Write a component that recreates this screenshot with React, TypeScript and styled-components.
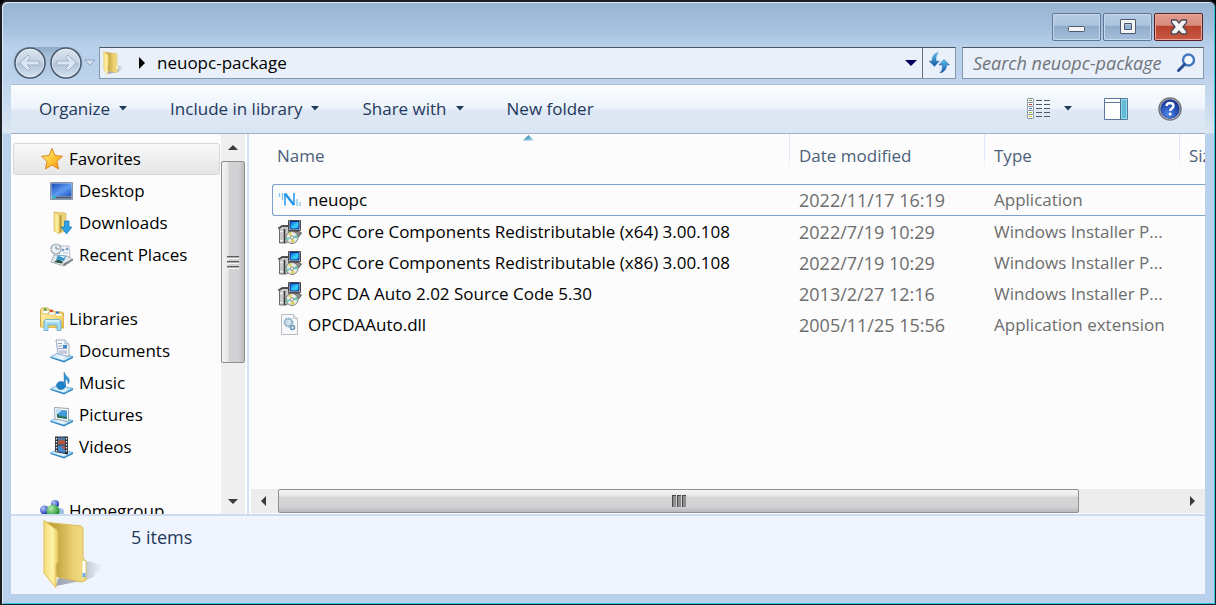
import React from "react";
import styled, { createGlobalStyle } from "styled-components";

const Global = createGlobalStyle`
  * { box-sizing: border-box; }
  html, body, #root { height: 100%; }
  body { margin: 0; background: #000; font-family: "Open Sans", "Noto Sans", sans-serif; font-size: 17px; line-height: 24px; color: #000; }
  button, input { font: inherit; color: inherit; }
  svg { display: block; flex: none; }
`;

/* ---------- window frame ---------- */
const Window = styled.main`
  height: 100vh;
  min-height: 400px;
  display: flex;
  flex-direction: column;
  padding: 0 10px 10px 9px;
  border: solid #1c2024;
  border-width: 2px 1px 1px 2px;
  border-radius: 7px 7px 0 0;
  box-shadow: inset 1px 1px 0 #dfeaf6, inset -1px -1px 0 #2fc4e2;
  background: linear-gradient(#9ab5d2 0, #a3bfdc 24px, #bad1eb 46px, #bad1eb 70px, #d3e1f0 120px, #dbe7f4 131px, #bad1eb 132px);
`;
const TitleBar = styled.header`
  display: flex;
  justify-content: flex-end;
  gap: 2px;
  height: 45px;
  padding-top: 11px;
  padding-right: 2px;
  flex: none;
`;
const CaptionButton = styled.button<{ $danger?: boolean }>`
  width: 49px;
  height: 28px;
  padding: 0;
  display: grid;
  place-items: center;
  border: 1px solid ${(p) => (p.$danger ? "#5b1f26" : "#5f7795")};
  border-radius: 2px;
  box-shadow: inset 0 0 0 1px ${(p) => (p.$danger ? "#e8a69c" : "#c6d8ec")};
  background: ${(p) =>
    p.$danger
      ? "linear-gradient(#e39b8f 0, #d98a7c 44%, #b8402a 45%, #c75a42 100%)"
      : "linear-gradient(#b4cbe3 0, #abc4de 44%, #8fabc9 45%, #a4c0dd 100%)"};
`;
const AddressRow = styled.div`
  display: flex;
  align-items: center;
  height: 32px;
  padding-right: 1px;
  flex: none;
`;
const NavCluster = styled.div`
  display: flex;
  align-items: center;
  gap: 1px;
  width: 88px;
  padding-left: 2px;
  flex: none;
`;
const OrbPair = styled.div`
  display: flex;
  gap: 4px;
  padding: 0 1px;
  border-radius: 17px;
  background: linear-gradient(#8ea9c6 0, #a9c0da 30%, #b4cae4 75%, #bad1eb 100%);
`;
const PlainButton = styled.button`
  padding: 0;
  border: 0;
  background: none;
  display: flex;
  align-items: center;
`;
const AddressBox = styled.div`
  display: flex;
  align-items: stretch;
  flex: 1;
  min-width: 0;
  height: 32px;
  border: 1px solid #8496ab;
  border-top-color: #4d5664;
  background: #e9f0f9;
`;
const Crumbs = styled.nav`
  display: flex;
  align-items: center;
  flex: 1;
  min-width: 0;
  padding-left: 3px;
  gap: 13px;
`;
const CrumbLink = styled.a`
  display: flex;
  align-items: center;
  gap: 11px;
  color: #000;
  text-decoration: none;
`;
const DropButton = styled(PlainButton)`
  width: 22px;
  justify-content: center;
`;
const RefreshButton = styled(PlainButton)`
  width: 33px;
  justify-content: center;
  border-left: 1px solid #65707f;
`;
const SearchBox = styled.label`
  display: flex;
  align-items: center;
  width: 242px;
  height: 32px;
  margin-left: 6px;
  padding: 0 7px 0 10px;
  flex: none;
  border: 1px solid #8496ab;
  border-top-color: #4d5664;
  background: #e9f0f9;
`;
const SearchInput = styled.input`
  flex: 1;
  min-width: 0;
  padding: 0;
  border: 0;
  outline: 0;
  background: none;
  font-size: 18px;
  font-style: italic;
  &::placeholder { color: #6f757c; opacity: 1; }
`;

/* ---------- command bar ---------- */
const Toolbar = styled.div`
  display: flex;
  align-items: center;
  height: 50px;
  margin-top: 5px;
  padding: 0 23px 0 28px;
  flex: none;
  color: #1e395b;
  border-top: 1px solid #a9bfd8;
  border-bottom: 1px solid #a0afc3;
  background: linear-gradient(#fbfdff 0, #edf4fc 48%, #dfe8f5 52%, #dae6f4 100%);
`;
const ToolbarGroup = styled.div`
  display: flex;
  align-items: center;
  gap: 42px;
  flex: 1;
`;
const CommandButton = styled(PlainButton)`
  gap: 8px;
  white-space: nowrap;
`;
const ViewTools = styled.div`
  display: flex;
  align-items: center;
`;
const ViewButton = styled(PlainButton)<{ $after: number }>`
  margin-right: ${(p) => p.$after}px;
`;

/* ---------- panes ---------- */
const Panes = styled.div`
  display: flex;
  flex: 1;
  min-height: 0;
  background: #fcfcfc;
`;
const Sidebar = styled.aside`
  display: flex;
  width: 238px;
  flex: none;
  border-right: 2px solid #d5e3f5;
`;
const Tree = styled.nav`
  flex: 1;
  min-width: 0;
  overflow: hidden;
  padding: 9px 1px 0 2px;
`;
const TreeGroup = styled.ul`
  list-style: none;
  margin: 0 0 32px;
  padding: 0;
`;
const TreeLink = styled.a<{ $level: number; $selected?: boolean }>`
  display: flex;
  align-items: center;
  gap: 5px;
  height: 32px;
  padding-left: ${(p) => (p.$level ? 36 : 26)}px;
  color: #000;
  text-decoration: none;
  white-space: nowrap;
  border: 1px solid ${(p) => (p.$selected ? "#d6d6d6" : "transparent")};
  border-radius: 3px;
  background: ${(p) => (p.$selected ? "linear-gradient(#f9f9f9, #e5e5e5)" : "none")};
`;
const VScroll = styled.div`
  display: flex;
  flex-direction: column;
  width: 24px;
  flex: none;
  margin-right: 2px;
  background: #efefef;
`;
const ScrollArrow = styled(PlainButton)<{ $across?: boolean }>`
  justify-content: center;
  flex: none;
  ${(p) => (p.$across ? "width: 27px;" : "height: 27px;")}
`;
const Track = styled.div`
  flex: 1;
  display: flex;
  min-width: 0;
  min-height: 0;
`;
const VThumb = styled.div`
  width: 24px;
  height: 62%;
  display: grid;
  place-items: center;
  border: 1px solid #8f8f8f;
  border-radius: 2px;
  background: linear-gradient(90deg, #f4f4f4 0, #e6e6e7 28%, #d2d2d4 32%, #d2d2d4 75%, #bdbdbf 100%);
`;
const HScroll = styled.div`
  display: flex;
  height: 24px;
  margin: 0 0 1px 2px;
  flex: none;
  background: #ededed;
`;
const HThumb = styled.div`
  width: 89%;
  height: 24px;
  display: grid;
  place-items: center;
  border: 1px solid #8f8f8f;
  border-radius: 2px;
  background: linear-gradient(#f4f4f4 0, #e8e8e8 28%, #d4d4d6 32%, #d4d4d6 72%, #b9b9bb 100%);
`;
const Content = styled.section`
  display: flex;
  flex-direction: column;
  flex: 1;
  min-width: 0;
`;
const ListArea = styled.div`
  flex: 1;
  min-height: 0;
  overflow: hidden;
  padding-left: 23px;
`;
const FileTable = styled.table`
  table-layout: fixed;
  width: 1107px;
  border-collapse: separate;
  border-spacing: 0;
`;
const HeadCell = styled.th`
  position: relative;
  height: 50px;
  padding: 10px 0 0 5px;
  vertical-align: top;
  text-align: left;
  font-weight: 400;
  color: #4c607a;
  & + & {
    padding-left: 9px;
    border-left: 1px solid;
    border-image: linear-gradient(#dce8f6 0, #dce8f6 45%, transparent 70%) 1;
  }
`;
const SortMark = styled.span`
  position: absolute;
  top: 1px;
  left: 251px;
`;
const Cell = styled.td<{ $tone?: "date" | "plain" }>`
  height: 31px;
  padding: 0 0 0 10px;
  white-space: nowrap;
  color: ${(p) => (p.$tone ? "#6d6d6d" : "#000")};
  font-size: ${(p) => (p.$tone === "date" ? 18 : 17)}px;
`;
const FileRow = styled.tr<{ $selected?: boolean }>`
  ${(p) =>
    p.$selected &&
    `& > td { border: solid #7da2ce; border-width: 1px 0; height: 32px; }
     & > td:first-child { border-left-width: 1px; border-radius: 3px 0 0 3px; padding-left: 9px; }`}
`;
const FileName = styled.span`
  display: flex;
  align-items: center;
  gap: 6px;
  margin-left: -4px;
`;
const Details = styled.footer`
  display: flex;
  gap: 25px;
  height: 80px;
  padding: 3px 0 0 31px;
  flex: none;
  color: #1e395b;
  font-size: 18px;
  border-top: 2px solid #cfdcf0;
  background: #f0f4fc;
`;
const ItemCount = styled.p`
  margin: 6px 0 0;
`;

/* ---------- drawings ---------- */
const Defs = () => (
  <svg width="0" height="0" style={{ position: "absolute" }} aria-hidden="true">
    <defs>
      <linearGradient id="blue" x1="0" y1="0" x2="0" y2="1"><stop offset="0" stopColor="#54c4ec" /><stop offset="1" stopColor="#1a55a6" /></linearGradient>
      <linearGradient id="screen" x1="0" y1="0" x2="1" y2="1"><stop offset="0" stopColor="#1748b8" /><stop offset=".55" stopColor="#5d9bf0" /><stop offset="1" stopColor="#1e55c4" /></linearGradient>
      <linearGradient id="gold" x1="0" y1="0" x2="1" y2="1"><stop offset="0" stopColor="#fff0a8" /><stop offset="1" stopColor="#e8bd3e" /></linearGradient>
      <linearGradient id="goldBack" x1="0" y1="0" x2="1" y2="0"><stop offset="0" stopColor="#b59532" /><stop offset=".35" stopColor="#c9aa48" /><stop offset=".7" stopColor="#ecd273" /><stop offset="1" stopColor="#f0db83" /></linearGradient>
      <linearGradient id="flap" x1="0" y1="0" x2="1" y2="0"><stop offset="0" stopColor="#f3dc7c" /><stop offset=".6" stopColor="#fff3a9" /><stop offset="1" stopColor="#e9cb60" /></linearGradient>
      <linearGradient id="shade" x1="0" y1="0" x2="1" y2="0"><stop offset="0" stopColor="#6d7480" stopOpacity=".65" /><stop offset=".6" stopColor="#8d96a4" stopOpacity=".5" /><stop offset="1" stopColor="#aab2be" stopOpacity="0" /></linearGradient>
      <linearGradient id="orb" x1="0" y1="0" x2="0" y2="1"><stop offset="0" stopColor="#dce6f1" /><stop offset=".48" stopColor="#c2d1e2" /><stop offset=".52" stopColor="#b0c3d8" /><stop offset="1" stopColor="#d5e3f1" /></linearGradient>
      <linearGradient id="star" x1="0" y1="0" x2="1" y2="1"><stop offset="0" stopColor="#fff6a0" /><stop offset=".5" stopColor="#ffc93a" /><stop offset="1" stopColor="#f28a12" /></linearGradient>
      <linearGradient id="tray" x1="0" y1="0" x2="1" y2="0"><stop offset="0" stopColor="#bfe2f5" /><stop offset=".5" stopColor="#eaf7fd" /><stop offset="1" stopColor="#9ccfee" /></linearGradient>
      <linearGradient id="sort" x1="0" y1="0" x2="1" y2="1"><stop offset="0" stopColor="#2c5f78" /><stop offset=".5" stopColor="#5fa9cc" /><stop offset="1" stopColor="#b5e2f7" /></linearGradient>
      <radialGradient id="help" cx=".4" cy=".8" r=".8"><stop offset="0" stopColor="#4c86e8" /><stop offset="1" stopColor="#132f92" /></radialGradient>
      <radialGradient id="ballBlue" cx=".35" cy=".3" r=".7"><stop offset="0" stopColor="#b9c8ff" /><stop offset="1" stopColor="#1e3bb4" /></radialGradient>
      <radialGradient id="ballGreen" cx=".35" cy=".3" r=".7"><stop offset="0" stopColor="#b5efb0" /><stop offset="1" stopColor="#178a2a" /></radialGradient>
      <linearGradient id="monitor" x1="0" y1="0" x2="1" y2="1"><stop offset="0" stopColor="#0a50d0" /><stop offset=".6" stopColor="#35d4f8" /><stop offset="1" stopColor="#1686e8" /></linearGradient>
    </defs>
  </svg>
);

const MinimizeIcon = () => <svg width="20" height="16"><rect x="1.500" y="7.500" width="16" height="5" rx="1" fill="#f4f4f4" stroke="#4b5a6e" /></svg>;
const MaximizeIcon = () => <svg width="18" height="18"><path d="M1.500 1.500h15v14h-15zM5.500 5.500v6h7v-6z" fill="#f4f4f4" fillRule="evenodd" stroke="#4b5a6e" /></svg>;
const CloseIcon = () => <svg width="20" height="18"><path d="M2.500 2h5L10 5l2.500-3h5v2.500L14 9l3.500 4v3h-5L10 13l-2.500 3h-5v-3L6 9 2.500 4.500z" fill="#f4f4f4" stroke="#4f4a58" strokeWidth="1.300" strokeLinejoin="round" /></svg>;
const Orb = ({ flip }: { flip?: boolean }) => (
  <svg width="32" height="32" viewBox="0 0 32 32">
    <circle cx="16" cy="16" r="15" fill="url(#orb)" stroke="#4a596c" strokeWidth="1.500" />
    <circle cx="16" cy="16" r="13.700" fill="none" stroke="#edf3f9" strokeOpacity=".6" />
    <path d="M6 16l8-8 2.500 2.500-3.500 3.500h12v4H13l3.500 3.500L14 24z" transform={flip ? "translate(32) scale(-1 1)" : undefined} fill="#dbe6f2" stroke="#9fb2c9" strokeLinejoin="round" />
  </svg>
);
const HistoryArrow = () => <svg width="12" height="8"><path d="M1 1h10L6 6.500z" fill="#d8e4f0" stroke="#8ea4bf" /></svg>;
const Caret = ({ color = "#1e395b" }: { color?: string }) => <svg width="10" height="8"><path d="M1 1h8L5 5.500z" fill={color} /></svg>;
const BigCaret = () => <svg width="12" height="8"><path d="M0 1h12L6 7z" fill="#00005c" /></svg>;
const CrumbArrow = () => <svg width="8" height="12"><path d="M1 0l6 6-6 6z" /></svg>;
const Folder = ({ w, h }: { w: number; h: number }) => (
  <svg width={w} height={h} viewBox="0 0 64 70">
    <path d="M14 67L16 60 42 42 50 43 62 47 54 54 52 58 44 61z" fill="url(#shade)" />
    <path d="M2 3l37 4q2 1 2 3v29l3 3v19l-4 2-25-5z" fill="url(#goldBack)" stroke="#d9bd5c" />
    <path d="M40.500 42h3v15h-3z" fill="#fff" /><path d="M40.500 54h3v4h-3z" fill="#63aee8" />
    <path d="M2 1.500L15 11q1 1 1 3v29l-2 2v24L2 54z" fill="url(#flap)" stroke="#dfbf54" />
  </svg>
);
const RefreshIcon = () => (
  <svg width="22" height="22" viewBox="0 0 22 22">
    <path d="M10 .5Q7.500 3.500 8 9h3.500L6.500 14.500 1 9h3Q4 2 10 .5z" fill="url(#blue)" stroke="#3e86c8" strokeWidth=".5" />
    <path d="M12 21q3-3 2.500-8H11l5-5.500 5.500 5.500h-3q0 6.500-6.500 8z" fill="url(#blue)" stroke="#1d549c" strokeWidth=".5" />
  </svg>
);
const SearchIcon = () => <svg width="20" height="20"><circle cx="12.500" cy="7" r="5.500" fill="#f3f9ff" stroke="#4278bd" strokeWidth="2.400" /><path d="M8.500 11.500L2.500 17.500" stroke="#254e94" strokeWidth="3" strokeLinecap="round" /></svg>;
const DetailsIcon = () => (
  <svg width="24" height="22" viewBox="0 0 24 22">
    {["#6c9a5a", "#d03a2c", "#3b73c8", "#8cc63f", "#e0c22a"].map((c, i) => (
      <g key={c}>
        <rect x=".5" y={i * 4 + 0.5} width="6" height="4" rx="1" fill="#fff" stroke="#7d8794" />
        <path d={`M2 ${i * 4 + 2.500}h3`} stroke={c} />
        <path d={`M9 ${i * 4 + 2.500}h6M17 ${i * 4 + 2.500}h6`} stroke="#4f5b69" />
      </g>
    ))}
  </svg>
);
const PreviewIcon = () => <svg width="24" height="22"><path d="M.5 .5h23v21H.5z" fill="#fff" stroke="#59789b" /><path d="M0 4.500h17" stroke="#59789b" /><path d="M17.500 1.500h5v19h-5z" fill="#64b9d4" stroke="#8be0ee" /><path d="M16.500 0v22" stroke="#456b8d" /></svg>;
const HelpIcon = () => (
  <svg width="24" height="24" viewBox="0 0 24 24">
    <circle cx="12" cy="12" r="11" fill="#eef0f4" stroke="#72757e" strokeWidth="1.500" />
    <circle cx="12" cy="12" r="9.500" fill="url(#help)" stroke="#26356c" strokeWidth=".6" />
    <path d="M8.500 9q.3-3 3.600-3 3.400.1 3.400 2.800 0 1.700-1.900 2.800-1.300.8-1.300 2.300" fill="none" stroke="#fff" strokeWidth="2.400" />
    <circle cx="12.200" cy="17" r="1.500" fill="#fff" />
  </svg>
);
const SortArrow = () => <svg width="11" height="6"><path d="M0 5.500L5.500 0 11 5.500z" fill="url(#sort)" /></svg>;
const ArrowGlyph = ({ d }: { d: string }) => <svg width="12" height="12"><path d={d} fill="#3a3a3a" /></svg>;
const Grip = ({ across }: { across?: boolean }) => (
  <svg width="14" height="14">
    {across ? (
      <>
        <path d="M0 1h4v12H0zM5 1h4v12H5zM10 1h4v12h-4z" fill="#8d8d8f" />
        <path d="M0 1h1v12H0zM5 1h1v12H5zM10 1h1v12h-1zM0 1h4v1H0zM5 1h4v1H5zM10 1h4v1h-4z" fill="#4a4a4c" />
      </>
    ) : (
      <>
        <path d="M1 1h12v1H1zM1 6h12v1H1zM1 11h12v1H1z" fill="#5c5c5e" />
        <path d="M1 2h12v1H1zM1 7h12v1H1zM1 12h12v1H1z" fill="#b0b0b2" />
        <path d="M1 3h12v1H1zM1 8h12v1H1zM1 13h12v1H1z" fill="#f7f7f7" />
      </>
    )}
  </svg>
);

const StarIcon = () => <svg width="24" height="24" viewBox="0 0 24 24"><path d="M12 1.500l3 7 7.500.8-5.600 5 1.700 7.700-6.600-4-6.600 4 1.700-7.700-5.600-5L9 8.500z" fill="url(#star)" stroke="#dc8a1c" strokeLinejoin="round" /></svg>;
const DesktopIcon = () => <svg width="24" height="24" viewBox="0 0 24 24"><path d="M.5 3.500h22v17H.5z" fill="#b9c2d0" stroke="#8b97aa" /><path d="M1.500 4.500h20v12.500h-20z" fill="url(#screen)" /><path d="M2 17.500h19.500v2H2z" fill="#3f5676" /><path d="M2 17h4v2.500H2z" fill="#34b5c4" /></svg>;
const DownloadsIcon = () => (
  <svg width="24" height="24" viewBox="0 0 24 24">
    <path d="M4 1l12 1v18l-7 2z" fill="#ecd47c" stroke="#d3b458" strokeWidth=".6" />
    <path d="M9.500 5l2-1.500V21l-2 1z" fill="#b8983c" />
    <path d="M4 1l5.500 3.500V23L4 20z" fill="url(#flap)" stroke="#d3b458" strokeWidth=".6" />
    <path d="M14.500 10H19v6h3l-5.500 7L11 16h3.500z" fill="#2ba3e6" stroke="#1773b3" strokeWidth=".7" />
  </svg>
);
const RecentIcon = () => (
  <svg width="24" height="24" viewBox="0 0 24 24">
    <path d="M10 3h9l1 11H9z" fill="#f5f7f9" stroke="#b6bec7" />
    <path d="M12 6h2v2h-2zM16 5h2v2h-2zM13 10h5" fill="#6798c8" stroke="#8ba9c9" strokeWidth=".6" />
    <circle cx="6" cy="6" r="5" fill="#e9f1f4" stroke="#9ba9b4" strokeWidth="1.200" /><path d="M6 2.500V6h3.500" fill="none" stroke="#5e7382" strokeWidth=".8" />
    <path d="M1 19L4 12l13 1 6 4-9 6z" fill="#e4e7ea" stroke="#969ca5" strokeWidth=".8" />
    <path d="M6 17l2-5 8 1-2 5z" fill="#3a97cc" /><path d="M8 12.500l7 .8-1 2z" fill="#d9eef8" /><path d="M4 19q4-4 9 0l-1 1.500z" fill="#284f43" /><path d="M14 23l9-6v-1.500L13 21z" fill="#737981" />
  </svg>
);
const LibrariesIcon = () => (
  <svg width="24" height="24" viewBox="0 0 24 24">
    <path d="M.5 20V3L2 1h6l1 2h4l1 2h8l1.500 1v15z" fill="url(#gold)" stroke="#cda945" />
    <path d="M2.500 3.500h7v3h-7zM8.500 5h7v3h-7zM15 6.500h7v3h-7z" fill="#fff" stroke="#c9b36a" strokeWidth=".6" />
    <path d="M4 1.500h2.500v2H4z" fill="#2d9d45" /><path d="M10 3h2.500v2H10z" fill="#d4372b" /><path d="M16 4.500h3v2h-3z" fill="#3878d0" />
    <path d="M1 8.500h22.500v12H1z" fill="url(#gold)" />
    <path d="M4 23.500V14l1.500-1.500h14L21 14v9.500h-4V18H8v5.500z" fill="#a5dbf3" stroke="#5faad1" strokeWidth=".8" /><path d="M5.500 14h14" stroke="#e7f8ff" strokeWidth="1.500" />
  </svg>
);
const Tray = () => <><path d="M.5 18L8 14l15 3.500-9 4.500z" fill="url(#tray)" stroke="#61abd8" strokeWidth=".8" /><path d="M.5 18L14 22l9-4.500v1.500L14 23.500.5 19z" fill="#2d86c4" /></>;
const DocumentsIcon = () => <svg width="24" height="24" viewBox="0 0 24 24"><Tray /><path d="M6 1h9l4 4v12.500L8 15z" fill="#f7fafd" stroke="#8298ac" strokeWidth=".8" /><path d="M15 1v4h4" fill="#d3deea" stroke="#8298ac" strokeWidth=".6" /><path d="M8 4.500h4M8 7h4M8 9.500h9M9 12h8M9 14h8" stroke="#969fc4" /><path d="M13 6h4v3h-4z" fill="#3c8bc8" /></svg>;
const MusicIcon = () => <svg width="24" height="24" viewBox="0 0 24 24"><Tray /><ellipse cx="11" cy="14.500" rx="4.500" ry="4" fill="#1e82c8" stroke="#0d5c9e" strokeWidth=".5" /><path d="M14 15V1q1 3 4.500 6 2 3-.5 6 .5-4-2.500-5v7z" fill="#3796d5" stroke="#1766a5" strokeWidth=".4" /></svg>;
const PicturesIcon = () => <svg width="24" height="24" viewBox="0 0 24 24"><Tray /><path d="M4.500 4.500l14 1v13L5 16z" fill="#fafcfd" stroke="#98a4b1" /><path d="M6.500 6.500l10.500 1V16L7 14.500z" fill="#439ad7" /><path d="M6.800 11l4 2 6.200 1v2L7 14.500z" fill="#2d7550" /><path d="M7 7l5 .5L7 11z" fill="#c9e9f8" /></svg>;
const VideosIcon = () => <svg width="24" height="24" viewBox="0 0 24 24"><Tray /><path d="M5 1.500h13v18L5 17z" fill="#2c3038" /><path d="M8 2.500h7v7H8z" fill="#477bb4" /><path d="M8 10.500h7v7.500l-7-1.500z" fill="#3e8ad1" /><path d="M8 7l3-3 4 2v3.500H8zM11 12l4-1v4z" fill="#b4573c" /><path d="M6.500 3v15M16.500 3v15" stroke="#e9edf0" strokeWidth="1.400" strokeDasharray="1.500 1.500" /></svg>;
const HomegroupIcon = () => <svg width="24" height="24" viewBox="0 0 24 24"><circle cx="15" cy="5" r="4" fill="url(#ballBlue)" /><circle cx="4.500" cy="11" r="4.500" fill="url(#ballBlue)" /><circle cx="20" cy="13" r="4" fill="#9fc2e6" /><circle cx="13" cy="12" r="6.500" fill="url(#ballGreen)" /></svg>;

const NeuIcon = () => <svg width="24" height="24" viewBox="0 0 24 24"><path d="M7 17.500V5.500M16 17V5" fill="none" stroke="#2196f3" strokeWidth="1.500" /><path d="M7 5.500L16 17" stroke="#2196f3" strokeWidth="2.400" /><path d="M1.500 5v4M4.500 5v7M19 11v7M22 14v4" stroke="#86c3f2" strokeWidth="1.300" /></svg>;
const InstallerIcon = () => (
  <svg width="24" height="24" viewBox="0 0 24 24">
    <path d="M1.500 9L4.500 6H11v15l-3 2H1.500z" fill="#c9c9c9" stroke="#6a6a6a" />
    <path d="M0 8.500L4 6h7" fill="none" stroke="#333" strokeWidth="1.400" /><path d="M6.500 9v14" stroke="#3a3a3a" strokeWidth="1.600" /><path d="M2 11.500h3M2 20.500h3" stroke="#f4f4f4" />
    <path d="M11 11.500h10l2.500 1.500-3 4h-8z" fill="#8a8a8a" stroke="#444" strokeWidth=".8" />
    <path d="M10.500.5h12v10h-12z" fill="#d9d6cc" stroke="#4c4c4c" /><path d="M12 1.500h9v7.500h-9z" fill="url(#monitor)" stroke="#0a2a90" />
    <circle cx="14" cy="17.500" r="6" fill="#e9ebe2" stroke="#707070" strokeWidth=".9" />
    <path d="M14 17.500l-4-4 3-1.500z" fill="#ddd45e" /><path d="M14 17.500l5-3 .5 4z" fill="#6dc9bf" /><path d="M14 17.500l-5 3-1-3z" fill="#6fcac5" /><path d="M14 17.500l3 5h-4z" fill="#d8cf54" />
    <circle cx="14" cy="17.500" r="1.600" fill="#fff" stroke="#666" strokeWidth=".7" />
  </svg>
);
const LibraryFileIcon = () => (
  <svg width="24" height="24" viewBox="0 0 24 24">
    <path d="M3.500 1.500h12l4 4v16h-16z" fill="#f8f9fa" stroke="#b9bdc1" /><path d="M15.500 1.500v4h4" fill="#e4e7ea" stroke="#c2c6ca" />
    <circle cx="10.500" cy="9.500" r="4" fill="#eaf2f8" stroke="#8eb2cc" strokeWidth="2" strokeDasharray="1.800 .7" /><circle cx="10.500" cy="9.500" r="3.200" fill="none" stroke="#8eb2cc" /><circle cx="10.500" cy="9.500" r="1.300" fill="none" stroke="#a9c3d6" strokeWidth=".8" />
    <circle cx="14.500" cy="14.500" r="2" fill="#dce9f2" stroke="#6d96b6" strokeWidth="1.600" />
  </svg>
);

/* ---------- data ---------- */
const groups = [
  { name: "Favorites", icon: <StarIcon />, selected: true, items: [
    { name: "Desktop", icon: <DesktopIcon /> },
    { name: "Downloads", icon: <DownloadsIcon /> },
    { name: "Recent Places", icon: <RecentIcon /> },
  ] },
  { name: "Libraries", icon: <LibrariesIcon />, items: [
    { name: "Documents", icon: <DocumentsIcon /> },
    { name: "Music", icon: <MusicIcon /> },
    { name: "Pictures", icon: <PicturesIcon /> },
    { name: "Videos", icon: <VideosIcon /> },
  ] },
  { name: "Homegroup", icon: <HomegroupIcon />, items: [] },
];
const files = [
  { name: "neuopc", icon: <NeuIcon />, date: "2022/11/17 16:19", type: "Application", selected: true },
  { name: "OPC Core Components Redistributable (x64) 3.00.108", icon: <InstallerIcon />, date: "2022/7/19 10:29", type: "Windows Installer P..." },
  { name: "OPC Core Components Redistributable (x86) 3.00.108", icon: <InstallerIcon />, date: "2022/7/19 10:29", type: "Windows Installer P..." },
  { name: "OPC DA Auto 2.02 Source Code 5.30", icon: <InstallerIcon />, date: "2013/2/27 12:16", type: "Windows Installer P..." },
  { name: "OPCDAAuto.dll", icon: <LibraryFileIcon />, date: "2005/11/25 15:56", type: "Application extension" },
];

export default function App() {
  return (
    <>
      <Global />
      <Defs />
      <Window>
        <TitleBar>
          <CaptionButton aria-label="Minimize"><MinimizeIcon /></CaptionButton>
          <CaptionButton aria-label="Maximize"><MaximizeIcon /></CaptionButton>
          <CaptionButton $danger aria-label="Close"><CloseIcon /></CaptionButton>
        </TitleBar>
        <AddressRow>
          <NavCluster>
            <OrbPair>
              <PlainButton aria-label="Back"><Orb /></PlainButton>
              <PlainButton aria-label="Forward"><Orb flip /></PlainButton>
            </OrbPair>
            <PlainButton aria-label="Recent pages"><HistoryArrow /></PlainButton>
          </NavCluster>
          <AddressBox>
            <Crumbs aria-label="Address">
              <Folder w={22} h={24} />
              <CrumbLink href="#neuopc-package"><CrumbArrow />neuopc-package</CrumbLink>
            </Crumbs>
            <DropButton aria-label="Previous locations"><BigCaret /></DropButton>
            <RefreshButton aria-label="Refresh"><RefreshIcon /></RefreshButton>
          </AddressBox>
          <SearchBox>
            <SearchInput type="text" placeholder="Search neuopc-package" aria-label="Search neuopc-package" />
            <SearchIcon />
          </SearchBox>
        </AddressRow>
        <Toolbar>
          <ToolbarGroup>
            <CommandButton>Organize<Caret /></CommandButton>
            <CommandButton>Include in library<Caret /></CommandButton>
            <CommandButton>Share with<Caret /></CommandButton>
            <CommandButton>New folder</CommandButton>
          </ToolbarGroup>
          <ViewTools>
            <ViewButton $after={12} aria-label="Change your view"><DetailsIcon /></ViewButton>
            <ViewButton $after={31} aria-label="More options"><Caret /></ViewButton>
            <ViewButton $after={30} aria-label="Show the preview pane"><PreviewIcon /></ViewButton>
            <ViewButton $after={0} aria-label="Get help"><HelpIcon /></ViewButton>
          </ViewTools>
        </Toolbar>
        <Panes>
          <Sidebar>
            <Tree aria-label="Places">
              {groups.map((g) => (
                <TreeGroup key={g.name}>
                  <li><TreeLink href="#" $level={0} $selected={g.selected}>{g.icon}{g.name}</TreeLink></li>
                  {g.items.map((it) => (
                    <li key={it.name}><TreeLink href="#" $level={1}>{it.icon}{it.name}</TreeLink></li>
                  ))}
                </TreeGroup>
              ))}
            </Tree>
            <VScroll>
              <ScrollArrow aria-label="Scroll up"><ArrowGlyph d="M1 8l5-5 5 5z" /></ScrollArrow>
              <Track><VThumb><Grip /></VThumb></Track>
              <ScrollArrow aria-label="Scroll down"><ArrowGlyph d="M1 4l5 5 5-5z" /></ScrollArrow>
            </VScroll>
          </Sidebar>
          <Content>
            <ListArea>
              <FileTable>
                <colgroup><col style={{ width: 517 }} /><col style={{ width: 195 }} /><col style={{ width: 195 }} /><col /></colgroup>
                <thead>
                  <tr>
                    <HeadCell scope="col">Name<SortMark><SortArrow /></SortMark></HeadCell>
                    <HeadCell scope="col">Date modified</HeadCell>
                    <HeadCell scope="col">Type</HeadCell>
                    <HeadCell scope="col">Size</HeadCell>
                  </tr>
                </thead>
                <tbody>
                  {files.map((f) => (
                    <FileRow key={f.name} $selected={f.selected}>
                      <Cell><FileName>{f.icon}{f.name}</FileName></Cell>
                      <Cell $tone="date">{f.date}</Cell>
                      <Cell $tone="plain">{f.type}</Cell>
                      <Cell $tone="plain" />
                    </FileRow>
                  ))}
                </tbody>
              </FileTable>
            </ListArea>
            <HScroll>
              <ScrollArrow $across aria-label="Scroll left"><ArrowGlyph d="M7 1L2 6l5 5z" /></ScrollArrow>
              <Track><HThumb><Grip across /></HThumb></Track>
              <ScrollArrow $across aria-label="Scroll right"><ArrowGlyph d="M4 1l5 5-5 5z" /></ScrollArrow>
            </HScroll>
          </Content>
        </Panes>
        <Details>
          <Folder w={64} h={70} />
          <ItemCount>5 items</ItemCount>
        </Details>
      </Window>
    </>
  );
}
